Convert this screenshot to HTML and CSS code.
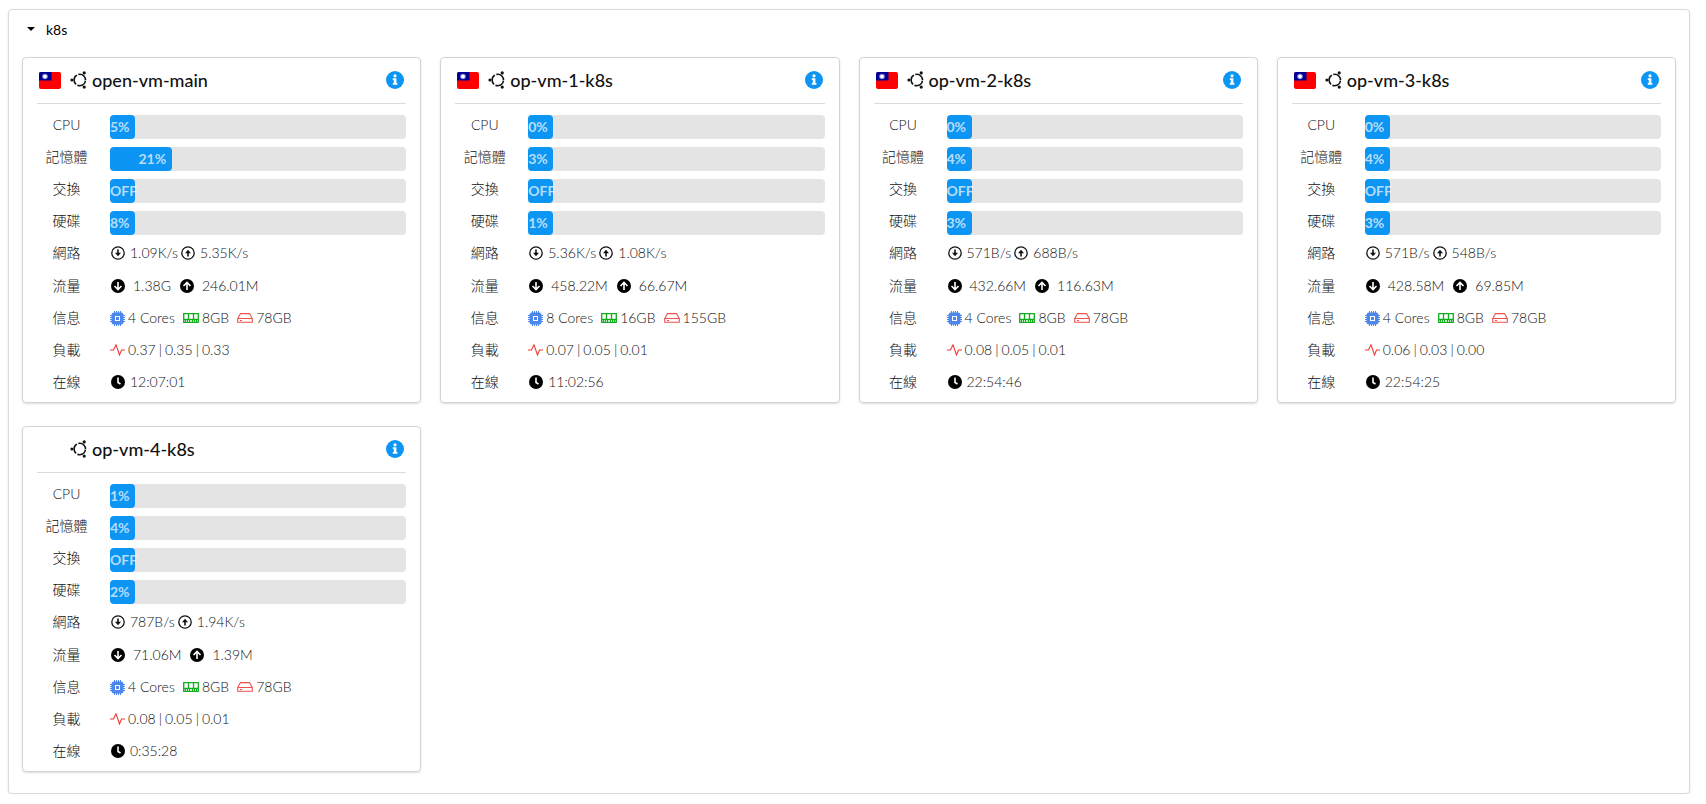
FILE: index.html
```html
<!DOCTYPE html>
<html lang="zh-Hant">
<head>
<meta charset="utf-8">
<title>k8s</title>
<link rel="stylesheet" href="styles.css">
</head>
<body>
<svg class="sprite" aria-hidden="true">
  <symbol id="flag" viewBox="0 0 22 17">
    <rect width="22" height="17" rx="2" fill="#fe0000"/>
    <path d="M2 0H12.500V8.500H0V2Q0 0 2 0Z" fill="#000095"/>
    <circle cx="6" cy="4.500" r="2.800" fill="#8f8fd0"/>
    <circle cx="6" cy="4.500" r="1.800" fill="#fff"/>
  </symbol>
  <symbol id="ubuntu" viewBox="0 0 18 18">
    <circle cx="9.800" cy="9" r="5.700" fill="none" stroke="#111" stroke-width="1.600" stroke-dasharray="10.440 1.500" stroke-dashoffset="-.750"/>
    <circle cx="1.900" cy="9" r="1.500" fill="#111"/>
    <circle cx="14.200" cy="1.900" r="1.600" fill="#111"/>
    <circle cx="14.200" cy="16.100" r="1.600" fill="#111"/>
  </symbol>
  <symbol id="info" viewBox="0 0 18 18">
    <circle cx="9" cy="9" r="9" fill="#0d95f3"/>
    <circle cx="9" cy="4.800" r="1.600" fill="#fff"/>
    <path d="M6.800 7.300H10.400V12H11.400V13.800H6.800V12H7.800V9H6.800Z" fill="#fff"/>
  </symbol>
  <symbol id="down-o" viewBox="0 0 14 14">
    <circle cx="7" cy="7" r="6.200" fill="none" stroke="#111" stroke-width="1.300"/>
    <path d="M6.200 3.500H7.800V6.800H10L7 10.300L4 6.800H6.200Z" fill="#111"/>
  </symbol>
  <symbol id="up-o" viewBox="0 0 14 14">
    <circle cx="7" cy="7" r="6.200" fill="none" stroke="#111" stroke-width="1.300"/>
    <path d="M6.200 10.500H7.800V7.200H10L7 3.700L4 7.200H6.200Z" fill="#111"/>
  </symbol>
  <symbol id="down" viewBox="0 0 14 14">
    <circle cx="7" cy="7" r="7" fill="#000"/>
    <path d="M7 3V10.500M3.500 7L7 10.500L10.500 7" fill="none" stroke="#fff" stroke-width="1.600"/>
  </symbol>
  <symbol id="up" viewBox="0 0 14 14">
    <circle cx="7" cy="7" r="7" fill="#000"/>
    <path d="M7 11V3.500M3.500 7L7 3.500L10.500 7" fill="none" stroke="#fff" stroke-width="1.600"/>
  </symbol>
  <symbol id="cpu" viewBox="0 0 15 15">
    <path d="M4.500 0V15M6.500 0V15M8.500 0V15M10.500 0V15M0 4.500H15M0 6.500H15M0 8.500H15M0 10.500H15" stroke="#4d87ec"/>
    <rect x="1.500" y="1.500" width="12" height="12" rx="2.500" fill="#4d87ec"/>
    <rect x="5.500" y="5.500" width="4" height="4" fill="none" stroke="#fff"/>
  </symbol>
  <symbol id="ram" viewBox="0 0 16 10">
    <path d="M.7.700H15.300V9.300H.7ZM.7 6.500H15.300M5.500.700V6.500M10.500.700V6.500" fill="none" stroke="#12ad1c" stroke-width="1.300"/>
    <path d="M2.500 7V9M4.500 7V9M6.500 7V9M9.500 7V9M11.500 7V9M13.500 7V9" stroke="#12ad1c"/>
  </symbol>
  <symbol id="disk" viewBox="0 0 16 10">
    <path d="M3.500.600H12.500L15.300 5.500V9.300H.7V5.500ZM.7 5.500H15.300M3 7.500H5" fill="none" stroke="#f0504c" stroke-width="1.100" stroke-linejoin="round"/>
  </symbol>
  <symbol id="pulse" viewBox="0 0 15 12">
    <path d="M0 6H3.500L6 .800L9.500 11L11.500 6H15" fill="none" stroke="#f03a36" stroke-width="1.100"/>
  </symbol>
  <symbol id="clock" viewBox="0 0 14 14">
    <circle cx="7" cy="7" r="7" fill="#000"/>
    <path d="M7 2.500V7.500L9.500 9" fill="none" stroke="#fff" stroke-width="1.600"/>
  </symbol>
</svg>
<main>
<details class="group" open>
  <summary><span class="caret"></span>k8s</summary>
  <div class="cards">

    <article class="card">
      <header><svg class="flag"><use href="#flag"/></svg><svg class="os"><use href="#ubuntu"/></svg><h2>open-vm-main</h2><button type="button" aria-label="open-vm-main"><svg><use href="#info"/></svg></button></header>
      <dl>
        <dt>CPU</dt><dd class="meter"><div class="bar" style="width:5%">5%</div></dd>
        <dt>記憶體</dt><dd class="meter"><div class="bar" style="width:21%">21%</div></dd>
        <dt>交換</dt><dd class="meter"><div class="bar" style="width:0%">OFF</div></dd>
        <dt>硬碟</dt><dd class="meter"><div class="bar" style="width:8%">8%</div></dd>
        <dt>網路</dt><dd class="net"><svg class="round"><use href="#down-o"/></svg>1.09K/s<svg class="round"><use href="#up-o"/></svg>5.35K/s</dd>
        <dt>流量</dt><dd class="traffic"><svg class="round"><use href="#down"/></svg>1.38G<svg class="round"><use href="#up"/></svg>246.01M</dd>
        <dt>信息</dt><dd class="spec"><svg class="cpu"><use href="#cpu"/></svg>4 Cores<svg class="flat"><use href="#ram"/></svg>8GB<svg class="flat"><use href="#disk"/></svg>78GB</dd>
        <dt>負載</dt><dd class="load"><svg class="pulse"><use href="#pulse"/></svg><span>0.37</span><span>|</span><span>0.35</span><span>|</span><span>0.33</span></dd>
        <dt>在線</dt><dd class="net"><svg class="round"><use href="#clock"/></svg>12:07:01</dd>
      </dl>
    </article>

    <article class="card">
      <header><svg class="flag"><use href="#flag"/></svg><svg class="os"><use href="#ubuntu"/></svg><h2>op-vm-1-k8s</h2><button type="button" aria-label="op-vm-1-k8s"><svg><use href="#info"/></svg></button></header>
      <dl>
        <dt>CPU</dt><dd class="meter"><div class="bar" style="width:0%">0%</div></dd>
        <dt>記憶體</dt><dd class="meter"><div class="bar" style="width:3%">3%</div></dd>
        <dt>交換</dt><dd class="meter"><div class="bar" style="width:0%">OFF</div></dd>
        <dt>硬碟</dt><dd class="meter"><div class="bar" style="width:1%">1%</div></dd>
        <dt>網路</dt><dd class="net"><svg class="round"><use href="#down-o"/></svg>5.36K/s<svg class="round"><use href="#up-o"/></svg>1.08K/s</dd>
        <dt>流量</dt><dd class="traffic"><svg class="round"><use href="#down"/></svg>458.22M<svg class="round"><use href="#up"/></svg>66.67M</dd>
        <dt>信息</dt><dd class="spec"><svg class="cpu"><use href="#cpu"/></svg>8 Cores<svg class="flat"><use href="#ram"/></svg>16GB<svg class="flat"><use href="#disk"/></svg>155GB</dd>
        <dt>負載</dt><dd class="load"><svg class="pulse"><use href="#pulse"/></svg><span>0.07</span><span>|</span><span>0.05</span><span>|</span><span>0.01</span></dd>
        <dt>在線</dt><dd class="net"><svg class="round"><use href="#clock"/></svg>11:02:56</dd>
      </dl>
    </article>

    <article class="card">
      <header><svg class="flag"><use href="#flag"/></svg><svg class="os"><use href="#ubuntu"/></svg><h2>op-vm-2-k8s</h2><button type="button" aria-label="op-vm-2-k8s"><svg><use href="#info"/></svg></button></header>
      <dl>
        <dt>CPU</dt><dd class="meter"><div class="bar" style="width:0%">0%</div></dd>
        <dt>記憶體</dt><dd class="meter"><div class="bar" style="width:4%">4%</div></dd>
        <dt>交換</dt><dd class="meter"><div class="bar" style="width:0%">OFF</div></dd>
        <dt>硬碟</dt><dd class="meter"><div class="bar" style="width:3%">3%</div></dd>
        <dt>網路</dt><dd class="net"><svg class="round"><use href="#down-o"/></svg>571B/s<svg class="round"><use href="#up-o"/></svg>688B/s</dd>
        <dt>流量</dt><dd class="traffic"><svg class="round"><use href="#down"/></svg>432.66M<svg class="round"><use href="#up"/></svg>116.63M</dd>
        <dt>信息</dt><dd class="spec"><svg class="cpu"><use href="#cpu"/></svg>4 Cores<svg class="flat"><use href="#ram"/></svg>8GB<svg class="flat"><use href="#disk"/></svg>78GB</dd>
        <dt>負載</dt><dd class="load"><svg class="pulse"><use href="#pulse"/></svg><span>0.08</span><span>|</span><span>0.05</span><span>|</span><span>0.01</span></dd>
        <dt>在線</dt><dd class="net"><svg class="round"><use href="#clock"/></svg>22:54:46</dd>
      </dl>
    </article>

    <article class="card">
      <header><svg class="flag"><use href="#flag"/></svg><svg class="os"><use href="#ubuntu"/></svg><h2>op-vm-3-k8s</h2><button type="button" aria-label="op-vm-3-k8s"><svg><use href="#info"/></svg></button></header>
      <dl>
        <dt>CPU</dt><dd class="meter"><div class="bar" style="width:0%">0%</div></dd>
        <dt>記憶體</dt><dd class="meter"><div class="bar" style="width:4%">4%</div></dd>
        <dt>交換</dt><dd class="meter"><div class="bar" style="width:0%">OFF</div></dd>
        <dt>硬碟</dt><dd class="meter"><div class="bar" style="width:3%">3%</div></dd>
        <dt>網路</dt><dd class="net"><svg class="round"><use href="#down-o"/></svg>571B/s<svg class="round"><use href="#up-o"/></svg>548B/s</dd>
        <dt>流量</dt><dd class="traffic"><svg class="round"><use href="#down"/></svg>428.58M<svg class="round"><use href="#up"/></svg>69.85M</dd>
        <dt>信息</dt><dd class="spec"><svg class="cpu"><use href="#cpu"/></svg>4 Cores<svg class="flat"><use href="#ram"/></svg>8GB<svg class="flat"><use href="#disk"/></svg>78GB</dd>
        <dt>負載</dt><dd class="load"><svg class="pulse"><use href="#pulse"/></svg><span>0.06</span><span>|</span><span>0.03</span><span>|</span><span>0.00</span></dd>
        <dt>在線</dt><dd class="net"><svg class="round"><use href="#clock"/></svg>22:54:25</dd>
      </dl>
    </article>

    <article class="card">
      <header><span class="flag"></span><svg class="os"><use href="#ubuntu"/></svg><h2>op-vm-4-k8s</h2><button type="button" aria-label="op-vm-4-k8s"><svg><use href="#info"/></svg></button></header>
      <dl>
        <dt>CPU</dt><dd class="meter"><div class="bar" style="width:1%">1%</div></dd>
        <dt>記憶體</dt><dd class="meter"><div class="bar" style="width:4%">4%</div></dd>
        <dt>交換</dt><dd class="meter"><div class="bar" style="width:0%">OFF</div></dd>
        <dt>硬碟</dt><dd class="meter"><div class="bar" style="width:2%">2%</div></dd>
        <dt>網路</dt><dd class="net"><svg class="round"><use href="#down-o"/></svg>787B/s<svg class="round"><use href="#up-o"/></svg>1.94K/s</dd>
        <dt>流量</dt><dd class="traffic"><svg class="round"><use href="#down"/></svg>71.06M<svg class="round"><use href="#up"/></svg>1.39M</dd>
        <dt>信息</dt><dd class="spec"><svg class="cpu"><use href="#cpu"/></svg>4 Cores<svg class="flat"><use href="#ram"/></svg>8GB<svg class="flat"><use href="#disk"/></svg>78GB</dd>
        <dt>負載</dt><dd class="load"><svg class="pulse"><use href="#pulse"/></svg><span>0.08</span><span>|</span><span>0.05</span><span>|</span><span>0.01</span></dd>
        <dt>在線</dt><dd class="net"><svg class="round"><use href="#clock"/></svg>0:35:28</dd>
      </dl>
    </article>

  </div>
</details>
</main>
</body>
</html>
```

FILE: styles.css
```css
* { box-sizing: border-box; }
body {
  margin: 0;
  background: #fff;
  color: rgba(0, 0, 0, .87);
  font: 14px/20px Lato, "Noto Sans CJK TC", sans-serif;
}
.sprite { display: none; }
main { padding: 9px 16px 0 8px; }
.group {
  padding: 10px 13px 21px;
  border: 1px solid #d9dadb;
  border-radius: 4px;
  box-shadow: 0 1px 2px rgba(34, 36, 38, .15);
}
summary {
  display: flex;
  align-items: center;
  gap: 11px;
  padding-left: 5px;
  margin-bottom: 17px;
  color: #000;
  cursor: pointer;
}
.caret {
  margin: 0 0 3px;
  border: 4px solid transparent;
  border-top-color: #000;
  border-bottom: 0;
}
.cards {
  display: grid;
  grid-template-columns: repeat(4, minmax(0, 1fr));
  gap: 23px 19px;
}
.card {
  padding: 0 14px 4px;
  border: 1px solid #d4d4d5;
  border-radius: 4px;
  box-shadow: 0 1px 2px rgba(34, 36, 38, .15);
}
header {
  display: flex;
  align-items: center;
  height: 46px;
  padding: 0 2px 1px;
  border-bottom: 1px solid #dcdcdd;
}
.flag { width: 22px; height: 17px; }
.os { width: 18px; height: 18px; margin: 0 4px 0 9px; }
h2 { flex: 1; margin: 0; color: #111; font-size: 18px; line-height: 24px; font-weight: 500; }
button { display: flex; padding: 0; border: 0; background: none; cursor: pointer; }
button svg { width: 18px; height: 18px; }
dl {
  display: grid;
  grid-template-columns: 59px minmax(0, 1fr);
  grid-template-rows: repeat(5, 32px) 33px repeat(3, 32px);
  column-gap: 14px;
  align-items: center;
  margin: 5px 0 0;
  color: #111;
  font-weight: 300;
}
dt { text-align: center; }
dd { display: flex; align-items: center; margin: 0; }
.meter {
  display: block;
  height: 24px;
  margin-top: 4px;
  border-radius: 4px;
  background: #e4e4e4;
}
.bar {
  min-width: 25px;
  height: 24px;
  padding-right: 6px;
  border-radius: 4px;
  background: #0d95f3;
  color: rgba(255, 255, 255, .7);
  font-weight: 700;
  line-height: 24px;
  text-align: right;
}
.round { width: 14px; height: 14px; margin: 0 5px 0 1px; }
.net .round + .round { margin-left: 3px; }
.traffic .round { margin-right: 8px; }
.traffic .round + .round { margin-left: 9px; }
.cpu { width: 15px; height: 15px; margin-right: 3px; }
.flat { width: 16px; height: 10px; margin: 0 3px 0 8px; }
.load { gap: 3px; }
.pulse { width: 15px; height: 12px; }
```
